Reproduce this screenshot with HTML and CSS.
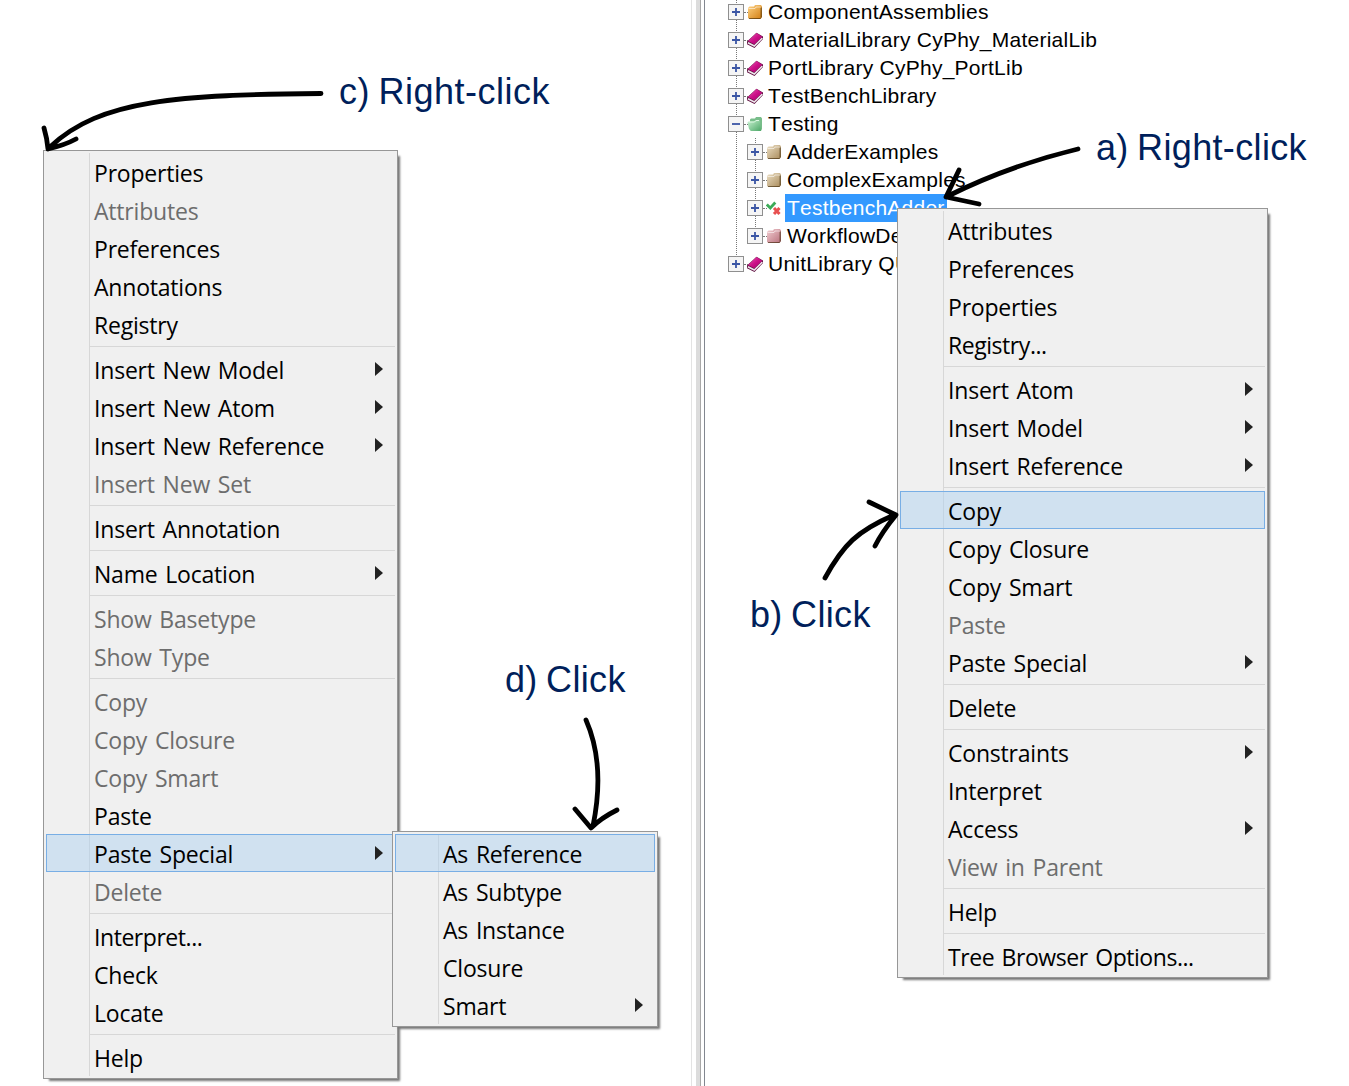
FILE: index.html
```html
<!DOCTYPE html>
<html lang="en">
<head>
<meta charset="utf-8">
<title>Copy and Paste Special</title>
<link rel="stylesheet" href="styles.css">
</head>
<body>
<svg class="defs" aria-hidden="true">
  <defs>
    <linearGradient id="orange" x2="1" y2="1"><stop offset="0" stop-color="#ffd384"/><stop offset="1" stop-color="#d07c10"/></linearGradient>
    <linearGradient id="tan" x2="1" y2="1"><stop offset="0" stop-color="#ecdfc4"/><stop offset="1" stop-color="#a88a5a"/></linearGradient>
    <linearGradient id="rose" x2="1" y2="1"><stop offset="0" stop-color="#f2cdd1"/><stop offset="1" stop-color="#b8707c"/></linearGradient>
    <linearGradient id="green" x2="1" y2="1"><stop offset="0" stop-color="#c8f2d0"/><stop offset="1" stop-color="#4da768"/></linearGradient>
    <linearGradient id="magenta" x2="1" y2="1"><stop offset="0" stop-color="#e860b4"/><stop offset=".5" stop-color="#cc1088"/><stop offset="1" stop-color="#a0006a"/></linearGradient>
    <symbol id="folder" viewBox="0 0 16 16"><path d="M1 4 2.500 2.500H7L8 1h6L15 2.500v10.500l-1.500 2H2.500L1 14z"/><path d="M13.500 4.500V15L15 13V3z" fill="#3a2505" opacity=".5"/><path d="M1.500 4.500H8l1-1.500h4.500" stroke="#fff" stroke-opacity=".55" fill="none"/><path d="M2 14.500h11.500" stroke="#3a2505" stroke-opacity=".6" fill="none"/></symbol>
    <symbol id="open" viewBox="0 0 16 16"><path d="M3 3.500l1-1h4L9 1h5l1 1.500V13l-1 2H4l-1-2z" fill="#78bd8a"/><path d="M.5 6.500 1.500 5.500H7L8.500 4H12l1 1 1 10H4L2 13z" fill="url(#green)"/><path d="M1.500 6h6l1.500-1.500h3" stroke="#e0f9e5" fill="none"/></symbol>
    <symbol id="book" viewBox="0 0 16 16"><path d="M0 9.500 9.500.8 16 4.500v2.500L7.500 16 0 12.300z" fill="#601040"/><path d="M.9 10.800 7.300 14 15.300 6" stroke="#eee6ec" stroke-width="1.700" fill="none"/><path d="M1 9 9.500 1.100 15.300 4.700 7.300 12.300z" fill="url(#magenta)"/></symbol>
    <symbol id="test" viewBox="0 0 16 16"><path d="M.8 4.500 4.300 8 9.300 2.500" stroke="#3cab58" stroke-width="2.800" fill="none"/><path d="m8 8 5.500 6m0-6L8 14" stroke="#e85050" stroke-width="3"/></symbol>
    <symbol id="plus" viewBox="0 0 16 16"><rect x=".5" y=".5" width="15" height="15" fill="#f5f5f5" stroke="#8f8f8f"/><path d="M4 8h8M8 4v8" stroke="#3b56a5" stroke-width="1.800"/></symbol>
    <symbol id="minus" viewBox="0 0 16 16"><rect x=".5" y=".5" width="15" height="15" fill="#f5f5f5" stroke="#8f8f8f"/><path d="M4 8h8" stroke="#3b56a5" stroke-width="1.800"/></symbol>
  </defs>
</svg>

<main class="workspace">
  <section class="canvas"></section>
  <div class="splitter"></div>
  <section class="browser">
    <ul class="tree">
      <li class="node"><svg class="box"><use href="#plus"/></svg><svg class="icon" fill="url(#orange)"><use href="#folder"/></svg><span class="label">ComponentAssemblies</span></li>
      <li class="node"><svg class="box"><use href="#plus"/></svg><svg class="icon"><use href="#book"/></svg><span class="label">MaterialLibrary CyPhy_MaterialLib</span></li>
      <li class="node"><svg class="box"><use href="#plus"/></svg><svg class="icon"><use href="#book"/></svg><span class="label">PortLibrary CyPhy_PortLib</span></li>
      <li class="node"><svg class="box"><use href="#plus"/></svg><svg class="icon"><use href="#book"/></svg><span class="label">TestBenchLibrary</span></li>
      <li class="node"><svg class="box"><use href="#minus"/></svg><svg class="icon"><use href="#open"/></svg><span class="label">Testing</span></li>
      <li class="node child"><svg class="box"><use href="#plus"/></svg><svg class="icon" fill="url(#tan)"><use href="#folder"/></svg><span class="label">AdderExamples</span></li>
      <li class="node child"><svg class="box"><use href="#plus"/></svg><svg class="icon" fill="url(#tan)"><use href="#folder"/></svg><span class="label">ComplexExamples</span></li>
      <li class="node child"><svg class="box"><use href="#plus"/></svg><svg class="icon"><use href="#test"/></svg><span class="label selected">TestbenchAdder</span></li>
      <li class="node child last"><svg class="box"><use href="#plus"/></svg><svg class="icon" fill="url(#rose)"><use href="#folder"/></svg><span class="label">WorkflowDe</span></li>
      <li class="node"><svg class="box"><use href="#plus"/></svg><svg class="icon"><use href="#book"/></svg><span class="label">UnitLibrary QU</span></li>
    </ul>
  </section>
</main>

<ul class="menu canvas-menu">
  <li class="item">Properties</li>
  <li class="item off">Attributes</li>
  <li class="item">Preferences</li>
  <li class="item">Annotations</li>
  <li class="item">Registry</li>
  <li class="rule"></li>
  <li class="item more">Insert New Model</li>
  <li class="item more">Insert New Atom</li>
  <li class="item more">Insert New Reference</li>
  <li class="item off">Insert New Set</li>
  <li class="rule"></li>
  <li class="item">Insert Annotation</li>
  <li class="rule"></li>
  <li class="item more">Name Location</li>
  <li class="rule"></li>
  <li class="item off">Show Basetype</li>
  <li class="item off">Show Type</li>
  <li class="rule"></li>
  <li class="item off">Copy</li>
  <li class="item off">Copy Closure</li>
  <li class="item off">Copy Smart</li>
  <li class="item">Paste</li>
  <li class="item more hot">Paste Special</li>
  <li class="item off">Delete</li>
  <li class="rule"></li>
  <li class="item dots">Interpret...</li>
  <li class="item">Check</li>
  <li class="item">Locate</li>
  <li class="rule"></li>
  <li class="item">Help</li>
</ul>

<ul class="menu paste-menu">
  <li class="item hot">As Reference</li>
  <li class="item">As Subtype</li>
  <li class="item">As Instance</li>
  <li class="item">Closure</li>
  <li class="item more">Smart</li>
</ul>

<ul class="menu tree-menu">
  <li class="item">Attributes</li>
  <li class="item">Preferences</li>
  <li class="item">Properties</li>
  <li class="item dots">Registry...</li>
  <li class="rule"></li>
  <li class="item more">Insert Atom</li>
  <li class="item more">Insert Model</li>
  <li class="item more">Insert Reference</li>
  <li class="rule"></li>
  <li class="item hot">Copy</li>
  <li class="item">Copy Closure</li>
  <li class="item">Copy Smart</li>
  <li class="item off">Paste</li>
  <li class="item more">Paste Special</li>
  <li class="rule"></li>
  <li class="item">Delete</li>
  <li class="rule"></li>
  <li class="item more">Constraints</li>
  <li class="item">Interpret</li>
  <li class="item more">Access</li>
  <li class="item off">View in Parent</li>
  <li class="rule"></li>
  <li class="item">Help</li>
  <li class="rule"></li>
  <li class="item dots">Tree Browser Options...</li>
</ul>

<svg class="arrows" viewBox="0 0 1349 1086">
  <path d="M1078 149Q1008 166 948 196M959 170 946 197 979 204"/>
  <path d="M825 578C843 545 857 531 894 515M869 502 896 515Q882 532 875 546"/>
  <path d="M321 93.500C180 95 100 99 50 147M44 128Q47 138 48 149 65 145 76 139"/>
  <path d="M586 720C600 752 601 787 593 826M575 809 591 828Q601 818 617 810"/>
</svg>
<p class="note note-a">a) Right-click</p>
<p class="note note-b">b) Click</p>
<p class="note note-c">c) Right-click</p>
<p class="note note-d">d) Click</p>
</body>
</html>
```
FILE: styles.css
```css
* { box-sizing: border-box; }

body {
  position: relative;
  width: 1349px;
  height: 1086px;
  margin: 0;
  overflow: hidden;
  background: #fff;
  font-family: "Liberation Sans", Arial, sans-serif;
}

ul { margin: 0; padding: 0; list-style: none; }
p { margin: 0; }
.defs { position: absolute; width: 0; height: 0; }

.workspace { display: flex; height: 100%; }
.canvas { width: 692px; border-right: 1px solid #e3e3e3; }
.splitter {
  width: 5px;
  margin: 0 3px 0 4px;
  background: #dcdcdc;
  border-right: 1px solid #a8a8a8;
}
.browser { flex: 1; border-left: 1px solid #828790; overflow: hidden; }

/* Project tree */
.tree {
  margin-top: -2px;
  padding-left: 23px;
  background: repeating-linear-gradient(#777 0 1px, transparent 1px 2px) 31px 0 / 1px 266px no-repeat;
}
.node {
  position: relative;
  display: flex;
  align-items: center;
  height: 28px;
  font-size: 21px;
  white-space: nowrap;
}
.node::after {
  content: "";
  position: absolute;
  left: 16px;
  top: 14px;
  width: 4px;
  border-top: 1px dotted #777;
}
.child {
  margin-left: 19px;
  background: repeating-linear-gradient(#777 0 1px, transparent 1px 2px) 8px 0 / 1px 28px no-repeat;
}
.child.last { background-size: 1px 14px; }
.box { position: relative; z-index: 1; width: 16px; height: 16px; margin-right: 3px; }
.icon { width: 16px; height: 16px; }
.label {
  height: 28px;
  padding: 0 2px;
  margin-left: 3px;
  line-height: 28px;
  letter-spacing: 0.25px;
  font-kerning: none;
}
.selected { background: #3399ff; color: #fff; }

/* Context menus */
.menu {
  position: absolute;
  padding: 2px;
  border: 1px solid #979797;
  background: linear-gradient(#d7d7d7, #d7d7d7) 45px 2px / 1px calc(100% - 4px) no-repeat #f0f0f0;
  box-shadow: 4px 4px 2px -2px #777;
  font-family: "Open Sans", "Noto Sans", sans-serif;
  font-size: 23px;
  letter-spacing: -0.2px;
  word-spacing: 2px;
}
.canvas-menu { left: 43px; top: 150px; width: 355px; }
.paste-menu { left: 392px; top: 831px; width: 266px; }
.tree-menu { left: 897px; top: 208px; width: 371px; }

.item {
  display: flex;
  align-items: center;
  justify-content: space-between;
  height: 38px;
  padding: 2px 12px 0 48px;
  line-height: 34px;
  white-space: nowrap;
  color: #000;
}
.dots { letter-spacing: -0.45px; }
.off { color: #6d6d6d; }
.hot {
  background: rgba(176, 210, 240, 0.5);
  box-shadow: inset 0 0 0 1px #78aee5;
}
.more::after {
  content: "";
  margin-top: -2px;
  border-left: 8px solid #222;
  border-top: 7px solid transparent;
  border-bottom: 7px solid transparent;
}
.rule {
  height: 7px;
  margin-left: 44px;
  background: linear-gradient(#d7d7d7, #d7d7d7) 0 3px / 100% 1px no-repeat;
}

/* Step annotations */
.arrows {
  position: absolute;
  inset: 0;
  width: 1349px;
  height: 1086px;
  fill: none;
  stroke: #000;
  stroke-width: 4.8;
  stroke-linecap: round;
  stroke-linejoin: round;
}
.note {
  position: absolute;
  color: #001f5b;
  font-size: 36px;
  line-height: 40px;
  letter-spacing: 0.35px;
  word-spacing: -2px;
  white-space: nowrap;
}
.note-a { left: 1096px; top: 128px; }
.note-b { left: 750px; top: 595px; }
.note-c { left: 339px; top: 72px; letter-spacing: 0.5px; }
.note-d { left: 505px; top: 660px; }
```
